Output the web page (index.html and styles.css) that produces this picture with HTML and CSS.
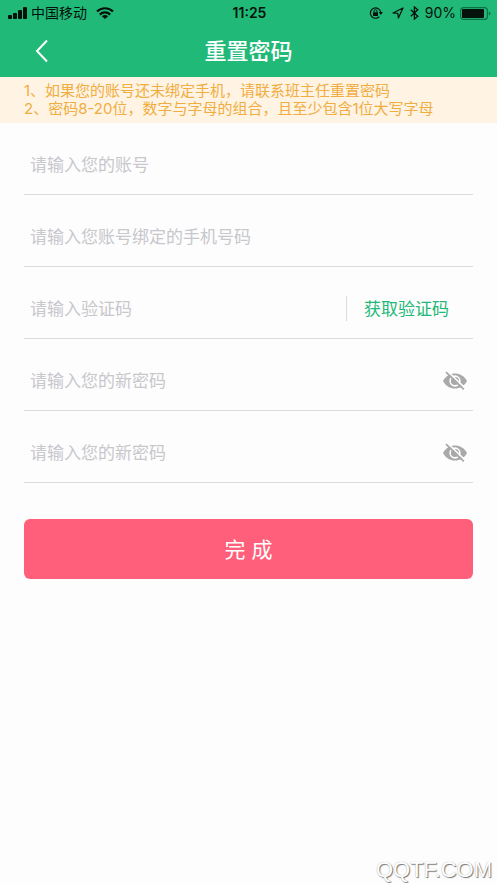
FILE: index.html
```html
<!DOCTYPE html>
<html lang="zh-CN">
<head>
<meta charset="utf-8">
<meta name="viewport" content="width=device-width, initial-scale=1">
<title>重置密码</title>
<link rel="stylesheet" href="styles.css">
</head>
<body>
<header class="header">
  <div class="status">
    <div class="status-side">
      <svg width="20" height="12" viewBox="0 0 20 12" aria-hidden="true"><rect x="0" y="8" width="4" height="4" rx="1"/><rect x="5" y="6" width="4" height="6" rx="1"/><rect x="10" y="3" width="4" height="9" rx="1"/><rect x="15" y="0" width="4" height="12" rx="1"/></svg>
      <span class="carrier">中国移动</span>
      <svg class="wifi" width="18" height="12" viewBox="0 0 18 12" aria-hidden="true"><g fill="none" stroke="#04120b" stroke-width="2.2"><path d="M1 4.6C5.4.1 12.6.1 17 4.6"/><path d="M3.8 7.6c2.9-2.9 7.5-2.9 10.4 0"/></g><path d="M5.9 9.2c1.8-1.6 4.4-1.6 6.2 0L9 12z"/></svg>
    </div>
    <span class="time">11:25</span>
    <div class="status-side status-right">
      <svg width="14" height="14" viewBox="0 0 14 14" aria-hidden="true"><path d="M10.4 10.6A5.2 5.2 0 1 1 11.7 6" fill="none" stroke="#04120b" stroke-width="1.2"/><path d="M9.7 6h4.2l-2.1 3z"/><rect x="4" y="6.2" width="5" height="3.8" rx=".5"/><path d="M5 6.5V5.2a1.5 1.5 0 0 1 3 0v1.3" fill="none" stroke="#04120b"/></svg>
      <svg class="location" width="12" height="12" viewBox="0 0 12 12" aria-hidden="true"><path d="M1 6 11 1 6.4 11 5.8 6.3z" fill="none" stroke="#04120b" stroke-width="1.2" stroke-linejoin="round"/></svg>
      <svg class="bluetooth" width="9" height="14" viewBox="0 0 9 14" aria-hidden="true"><path d="m.8 3.8 7 6.4L4.4 13V1l3.4 2.8-7 6.4" fill="none" stroke="#04120b" stroke-width="1.3"/></svg>
      <span class="percent">90%</span>
      <svg class="battery" width="31" height="13" viewBox="0 0 31 13" aria-hidden="true"><rect x=".6" y=".6" width="26.8" height="11.8" rx="3" fill="none" stroke="#0d7045" stroke-width="1.2"/><rect x="2" y="2" width="22" height="9" rx="1"/><path d="M28.8 4.4q1.6.6 1.6 2.1t-1.6 2.1z" fill="#0d7045"/></svg>
    </div>
  </div>
  <div class="nav">
    <button class="back" type="button" aria-label="返回"><svg width="14" height="24" viewBox="0 0 14 24"><path d="M12 1.5 2 12l10 10.5" fill="none" stroke="#fff" stroke-width="2"/></svg></button>
    <h1 class="title">重置密码</h1>
  </div>
</header>
<div class="tips">
  <p>1、如果您的账号还未绑定手机，请联系班主任重置密码</p>
  <p>2、密码8-20位，数字与字母的组合，且至少包含1位大写字母</p>
</div>
<form class="form">
  <div class="row"><input type="text" aria-label="账号" placeholder="请输入您的账号"></div>
  <div class="row"><input type="tel" aria-label="手机号码" placeholder="请输入您账号绑定的手机号码"></div>
  <div class="row"><input type="text" aria-label="验证码" placeholder="请输入验证码"><button class="code" type="button">获取验证码</button></div>
  <div class="row"><input type="password" aria-label="新密码" placeholder="请输入您的新密码"><button class="eye" type="button" aria-label="显示密码"><svg width="24" height="20" viewBox="0 0 24 20"><path d="M0 10C5 0 19 0 24 10 19 20 5 20 0 10z" fill="#a9a9a9"/><circle cx="12" cy="10" r="4.9" fill="#a9a9a9" stroke="#fdfdfd" stroke-width="1.6"/><path d="m4.7.4 18 17.2" stroke="#fdfdfd" stroke-width="1.6"/><path d="m3 1.2 17.8 17.2" stroke="#a9a9a9" stroke-width="1.8"/></svg></button></div>
  <div class="row"><input type="password" aria-label="确认新密码" placeholder="请输入您的新密码"><button class="eye" type="button" aria-label="显示密码"><svg width="24" height="20" viewBox="0 0 24 20"><path d="M0 10C5 0 19 0 24 10 19 20 5 20 0 10z" fill="#a9a9a9"/><circle cx="12" cy="10" r="4.9" fill="#a9a9a9" stroke="#fdfdfd" stroke-width="1.6"/><path d="m4.7.4 18 17.2" stroke="#fdfdfd" stroke-width="1.6"/><path d="m3 1.2 17.8 17.2" stroke="#a9a9a9" stroke-width="1.8"/></svg></button></div>
  <button class="submit" type="submit">完 成</button>
</form>
<footer class="watermark">QQTF.COM</footer>
</body>
</html>
```
FILE: styles.css
```css
* {
  box-sizing: border-box;
}

body {
  margin: 0;
  min-height: 100vh;
  display: flex;
  flex-direction: column;
  background: #fdfdfd;
  font-family: Inter, "Noto Sans CJK SC", sans-serif;
}

svg {
  display: block;
  flex: none;
}

button {
  padding: 0;
  border: 0;
  background: none;
  font: inherit;
  cursor: pointer;
}

.header {
  background: #21b978;
}

.status {
  display: flex;
  align-items: center;
  height: 26px;
  padding: 0 6px 0 8px;
  color: #04120b;
  fill: #04120b;
  font-size: 14px;
  line-height: 20px;
}

.status-side {
  flex: 1;
  display: flex;
  align-items: center;
}

.status-right {
  justify-content: flex-end;
}

.carrier {
  margin-left: 3px;
}

.wifi {
  margin-left: 9px;
}

.time {
  font-weight: 600;
}

.location {
  margin-left: 9px;
}

.bluetooth {
  margin-left: 6px;
}

.percent {
  margin-left: 6px;
}

.battery {
  margin-left: 4px;
}

.nav {
  display: grid;
  grid-template-columns: 84px 1fr 84px;
  align-items: center;
  height: 51px;
  padding-bottom: 2px;
}

.back {
  display: flex;
  align-items: center;
  justify-content: center;
  height: 48px;
}

.title {
  margin: 0;
  color: #fff;
  font-size: 22px;
  font-weight: 500;
  line-height: 32px;
  text-align: center;
}

.tips {
  padding: 5px 24px;
  background: #fff3e3;
  color: #f0ad42;
  font-family: Inter, "Noto Sans CJK SC", sans-serif;
  font-size: 15px;
  line-height: 18px;
}

.tips p {
  margin: 0;
}

.form {
  padding: 0 24px;
}

.row {
  display: flex;
  align-items: center;
  height: 72px;
  padding: 12px 6px 0;
  border-bottom: 1px solid #dcdcdc;
}

.row input {
  flex: 1;
  min-width: 0;
  height: 40px;
  padding: 0;
  border: 0;
  outline: 0;
  background: none;
  color: #333;
  font: inherit;
  font-size: 17px;
}

.row input::placeholder {
  color: #c7c7cc;
  opacity: 1;
}

.code {
  height: 25px;
  padding: 2px 18px 0 17px;
  border-left: 1px solid #dcdcdc;
  color: #21b978;
  font-size: 17px;
  line-height: 23px;
}

.submit {
  display: block;
  width: 100%;
  height: 60px;
  margin-top: 36px;
  padding-bottom: 2px;
  border-radius: 6px;
  background: #ff5f7a;
  color: #fff;
  font-size: 21px;
}

.watermark {
  margin-top: auto;
  padding: 0 5px 1px;
  color: #fff;
  font-family: "Liberation Sans", sans-serif;
  font-size: 22px;
  line-height: 24px;
  text-align: right;
  text-shadow: 1px 1px 1px #777, 0 0 1px #aaa;
}
```
